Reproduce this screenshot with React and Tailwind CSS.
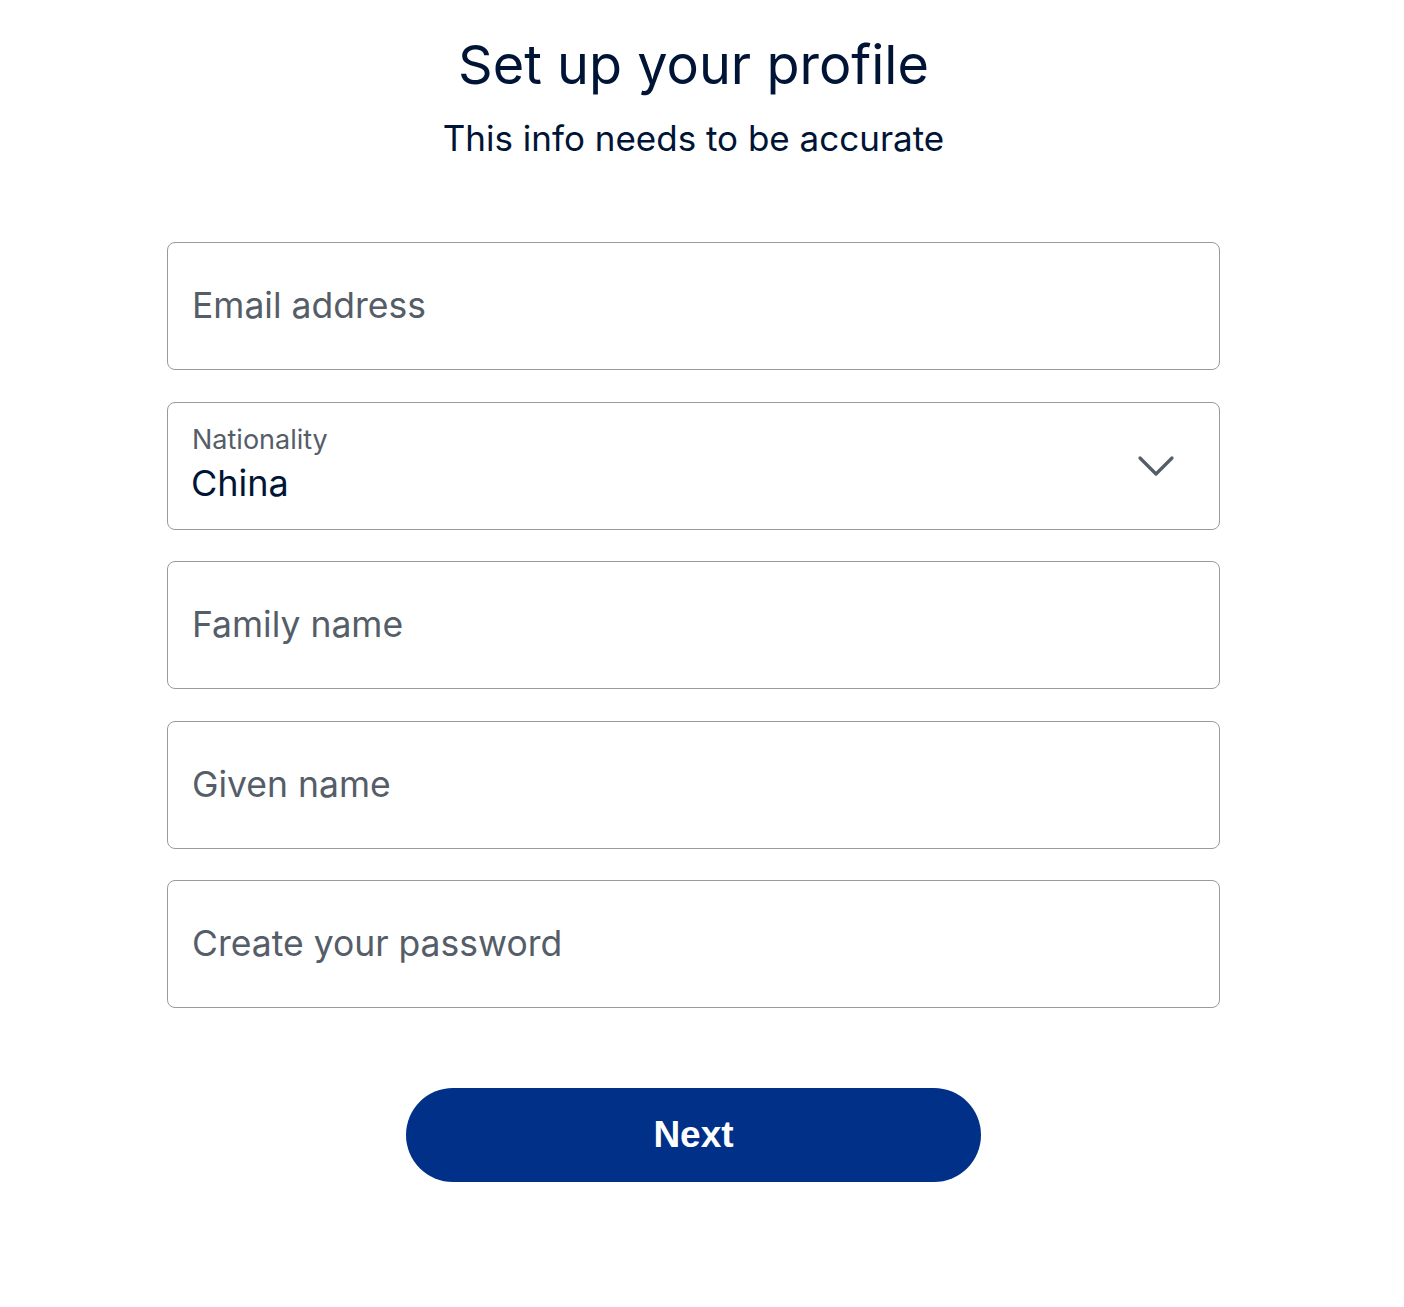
import { ChevronDown } from 'lucide-react'

function Field({ label }) {
  return (
    <div className="h-[128px] w-full rounded-lg border border-[#9a9a9a] px-6 flex items-center">
      <span className="text-[35.5px] text-[#545d68]">{label}</span>
    </div>
  )
}

export default function App() {
  return (
    <div className="min-h-screen bg-white font-['Inter',sans-serif] text-[#001435]">
      <div className="w-[1387px]">
        <div className="flex flex-col items-center pt-[31px]">
          <h1 className="text-[54px] leading-[68px]">Set up your profile</h1>
          <p className="text-[35px] leading-[46px] mt-[16px]">This info needs to be accurate</p>
        </div>

        <div className="mx-[167px] mt-[81px] flex flex-col gap-[31.5px] w-[1053px]">
          <Field label="Email address" />

          <div className="h-[128px] w-full rounded-lg border border-[#9a9a9a] pl-6 pr-[31px] flex items-center justify-between">
            <div className="flex flex-col -mt-[3px]">
              <span className="text-[27px] leading-[34px] text-[#545d68]">Nationality</span>
              <span className="text-[36px] leading-[46px] text-[#001435] mt-[3px] -ml-px">China</span>
            </div>
            <ChevronDown size={64} strokeWidth={1.2} className="text-[#545d68]" />
          </div>

          <Field label="Family name" />
          <Field label="Given name" />
          <Field label="Create your password" />
        </div>

        <div className="flex justify-center mt-[80px]">
          <button className="w-[575px] h-[94px] rounded-full bg-[#003087] text-white font-['Liberation_Sans',sans-serif] font-bold text-[37px]">
            Next
          </button>
        </div>
      </div>
    </div>
  )
}
